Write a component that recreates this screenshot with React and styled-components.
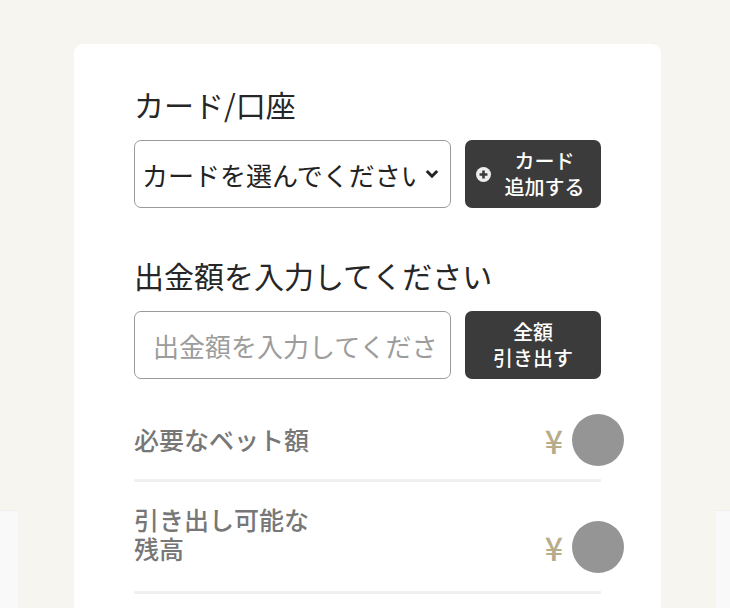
import React from 'react';
import styled, { createGlobalStyle } from 'styled-components';

const GlobalStyle = createGlobalStyle`
    html, body {
        margin: 0;
        padding: 0;
        background: #f7f5ef;
        font-family: "Noto Sans CJK JP", "Noto Sans", sans-serif;
    }
    * { box-sizing: border-box; }
`

const Page = styled.div`
    display: flex;
    align-items: flex-start;
    height: 608px;
    overflow: hidden;
`
const Peek = styled.div`
    width: ${(p) => p.w}px;
    margin-top: 510px;
    height: 200px;
    background: #f9f9f9;
    border-top: 1px solid #efefef;
`
const Card = styled.div`
    width: 587px;
    margin: 44px 55px 0 56px;
    background: #fff;
    border-radius: 9px;
    padding: 40px 60px 0 60px;
    min-height: 600px;
`
const Title = styled.div`
    font-size: 30px;
    font-weight: 400;
    line-height: 40px;
    color: #262626;
    margin-top: ${(p) => p.top || 0}px;
    margin-bottom: 16px;
`
const FieldRow = styled.div`
    display: flex;
    gap: 14px;
    height: 68px;
`
const SelectWrap = styled.div`
    position: relative;
    flex: 1;
`
const Select = styled.select`
    appearance: none;
    width: 100%;
    height: 100%;
    border: 1.5px solid #9a9a9a;
    border-radius: 7px;
    background: #fff;
    padding: 0 34px 0 7px;
    font-family: inherit;
    font-size: 26px;
    color: #222;
`
const Chevron = styled.svg`
    position: absolute;
    right: 12px;
    top: 29px;
    pointer-events: none;
`
const Input = styled.input`
    flex: 1;
    min-width: 0;
    border: 1.5px solid #9a9a9a;
    border-radius: 7px;
    padding: 0 10px 0 18px;
    font-family: inherit;
    font-size: 26px;
    color: #222;
    &::placeholder { color: #9c9c9c; }
`
const DarkButton = styled.button`
    width: 136px;
    flex: none;
    border: none;
    border-radius: 7px;
    background: #3b3b3b;
    color: #fff;
    font-family: inherit;
    font-size: 20px;
    font-weight: 500;
    line-height: 26px;
    display: flex;
    align-items: center;
    justify-content: center;
    gap: 14px;
    padding: 0 ${(p) => p.pr || 0}px 0 0;
`
const BtnText = styled.span`
    display: flex;
    flex-direction: column;
    align-items: center;
`
const InfoRow = styled.div`
    display: flex;
    justify-content: space-between;
    align-items: flex-end;
    margin-top: ${(p) => p.top || 0}px;
    padding: ${(p) => p.pt || 0}px 0 ${(p) => p.pb}px 0;
    border-bottom: 3px solid #f0f0f0;
`
const Label = styled.div`
    font-size: 25px;
    font-weight: 500;
    line-height: 29px;
    color: #777;
    margin-bottom: ${(p) => p.mb}px;
`
const Amount = styled.div`
    display: flex;
    align-items: center;
    gap: 9px;
    margin-right: -23px;
`
const Yen = styled.span`
    font-size: 32px;
    font-weight: 500;
    color: #b8ad8b;
    line-height: 1;
`
const Dot = styled.div`
    width: 52px;
    height: 52px;
    border-radius: 50%;
    background: #959595;
`

const PlusIcon = () => (
    <svg width="15" height="15" viewBox="0 0 14 14">
        <circle cx="7" cy="7" r="7" fill="#eee" />
        <path d="M7 3.3v7.4M3.3 7h7.4" stroke="#3b3b3b" strokeWidth="2.4" />
    </svg>
)

const App = () => {
    return (
        <>
            <GlobalStyle />
            <Page>
                <Peek w={18} />
                <Card>
                    <Title>カード/口座</Title>
                    <FieldRow>
                        <SelectWrap>
                            <Select defaultValue="">
                                <option value="">カードを選んでください</option>
                            </Select>
                            <Chevron width="14" height="10" viewBox="0 0 14 10">
                                <path d="M1.8 2l5.2 5.2 5.2-5.2" fill="none" stroke="#222" strokeWidth="3" />
                            </Chevron>
                        </SelectWrap>
                        <DarkButton pr={6}>
                            <PlusIcon />
                            <BtnText>
                                <span>カード</span>
                                <span>追加する</span>
                            </BtnText>
                        </DarkButton>
                    </FieldRow>

                    <Title top={47}>出金額を入力してください</Title>
                    <FieldRow>
                        <Input placeholder="出金額を入力してください" />
                        <DarkButton>
                            <BtnText>
                                <span>全額</span>
                                <span>引き出す</span>
                            </BtnText>
                        </DarkButton>
                    </FieldRow>

                    <InfoRow top={35} pb={13}>
                        <Label mb={12}>必要なベット額</Label>
                        <Amount>
                            <Yen>¥</Yen>
                            <Dot />
                        </Amount>
                    </InfoRow>
                    <InfoRow pt={23} pb={18}>
                        <Label mb={10}>引き出し可能な<br />残高</Label>
                        <Amount>
                            <Yen>¥</Yen>
                            <Dot />
                        </Amount>
                    </InfoRow>
                </Card>
                <Peek w={14} />
            </Page>
        </>
    )
}

export default App
